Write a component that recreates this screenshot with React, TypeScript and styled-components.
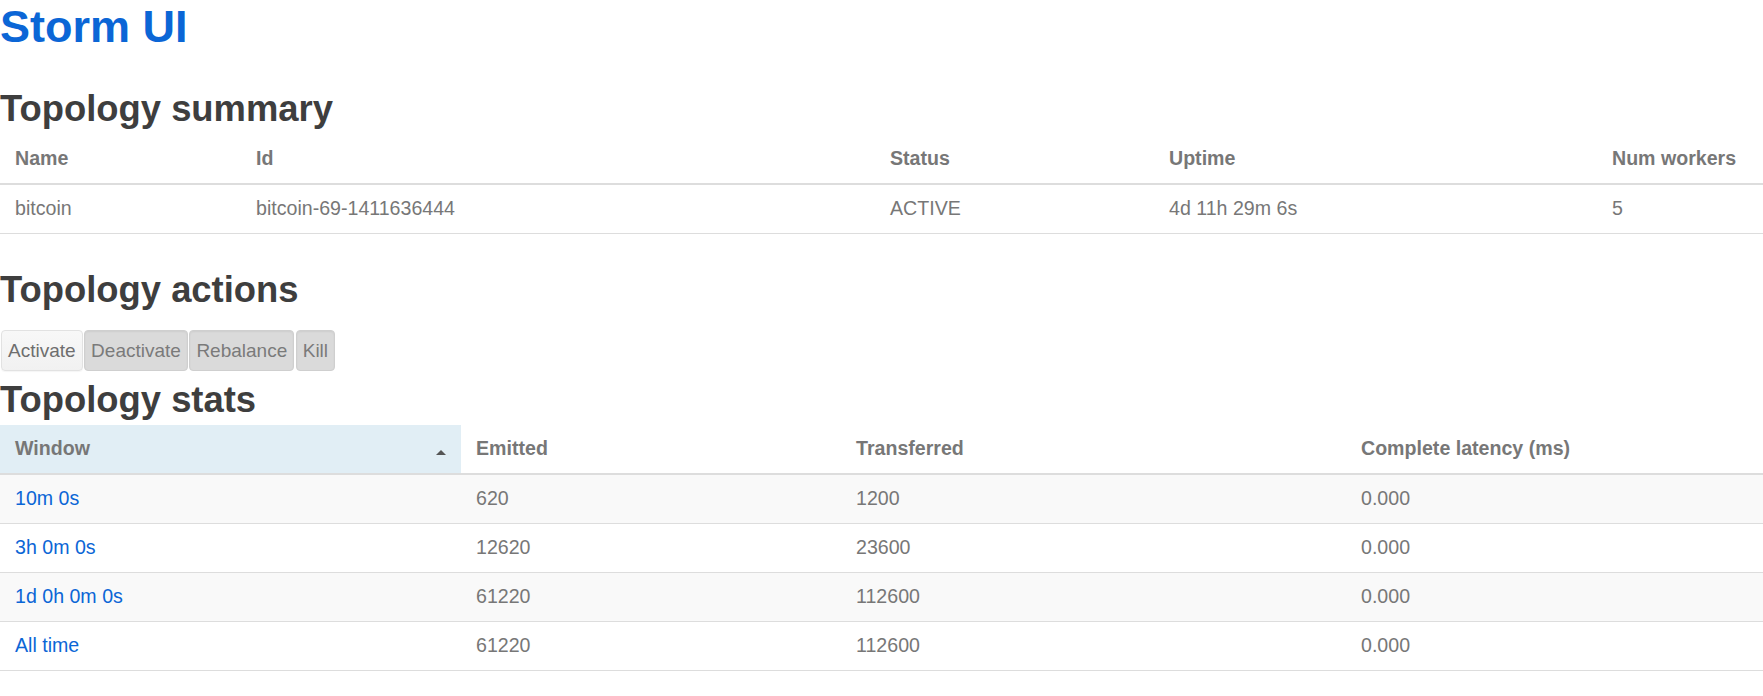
import React from "react";
import styled, { createGlobalStyle } from "styled-components";

const GlobalStyle = createGlobalStyle`
  html, body {
    margin: 0;
    padding: 0;
    background: #ffffff;
  }
  body {
    font-family: "Liberation Sans", Arial, Helvetica, sans-serif;
    font-size: 19.6px;
    line-height: 27px;
    color: #777777;
  }
`;

const Page = styled.div`
  display: flex;
  flex-direction: column;
`;

const Title = styled.h1`
  margin: 3px 0 0;
  font-size: 45px;
  line-height: 48px;
  font-weight: bold;
`;

const TitleLink = styled.a`
  color: #0b66d6;
  text-decoration: none;
`;

const Heading = styled.h2<{ $top: number; $bottom: number }>`
  margin: ${(p) => p.$top}px 0 ${(p) => p.$bottom}px;
  font-size: 36.4px;
  line-height: 40px;
  font-weight: bold;
  color: #3e3e3e;
`;

const Table = styled.table`
  width: 100%;
  table-layout: fixed;
  border-collapse: separate;
  border-spacing: 0;
`;

const Col = styled.col<{ $w: number }>`
  width: ${(p) => p.$w}px;
`;

const HeadCell = styled.th<{ $sorted?: boolean }>`
  padding: 10.5px 14px 10.5px 15px;
  text-align: left;
  font-weight: bold;
  color: #777777;
  white-space: nowrap;
  border-bottom: 2px solid #dddddd;
  background: ${(p) => (p.$sorted ? "#e1eef5" : "transparent")};
`;

const HeadInner = styled.div`
  display: flex;
  justify-content: space-between;
`;

const SortArrow = styled.span`
  width: 0;
  height: 0;
  border-left: 5.5px solid transparent;
  border-right: 5.5px solid transparent;
  border-bottom: 5px solid #555555;
  align-self: flex-end;
  margin: 0 1px 7.5px 0;
`;

const Row = styled.tr<{ $striped?: boolean }>`
  background: ${(p) => (p.$striped ? "#f9f9f9" : "#ffffff")};
`;

const Cell = styled.td`
  padding: 10.5px 14px 10.5px 15px;
  text-align: left;
  color: #777777;
  white-space: nowrap;
  border-bottom: 1px solid #dddddd;
`;

const WindowLink = styled.a`
  color: #0b66d6;
  text-decoration: none;
`;

const Actions = styled.div`
  display: flex;
  gap: 1.5px;
  padding-left: 1px;
`;

const ActionButton = styled.button<{ $enabled?: boolean }>`
  font-family: inherit;
  font-size: 19px;
  line-height: 27px;
  padding: 6px;
  border-radius: 4px;
  cursor: default;
  border: 1px solid ${(p) => (p.$enabled ? "#e2e2e2" : "#cfcfcf")};
  background: ${(p) =>
    p.$enabled ? "linear-gradient(#f8f8f8, #f1f1f1)" : "#dadada"};
  color: ${(p) => (p.$enabled ? "#6e6e6e" : "#7a7a7a")};
  box-shadow: ${(p) =>
    p.$enabled ? "0 1px 1px rgba(0,0,0,0.04)" : "inset 0 1px 2px rgba(0,0,0,0.06)"};
`;

const summaryCols = [241, 634, 279, 443, 166];
const summaryHead = ["Name", "Id", "Status", "Uptime", "Num workers"];
const summaryRow = ["bitcoin", "bitcoin-69-1411636444", "ACTIVE", "4d 11h 29m 6s", "5"];

const statsCols = [461, 380, 505, 417];
const statsRows = [
  ["10m 0s", "620", "1200", "0.000"],
  ["3h 0m 0s", "12620", "23600", "0.000"],
  ["1d 0h 0m 0s", "61220", "112600", "0.000"],
  ["All time", "61220", "112600", "0.000"],
];

export default function App() {
  return (
    <>
      <GlobalStyle />
      <Page>
        <Title>
          <TitleLink href="#">Storm UI</TitleLink>
        </Title>

        <Heading $top={37.5} $bottom={6}>
          Topology summary
        </Heading>
        <Table>
          <colgroup>
            {summaryCols.map((w, i) => (
              <Col key={i} $w={w} />
            ))}
          </colgroup>
          <thead>
            <tr>
              {summaryHead.map((h) => (
                <HeadCell key={h}>{h}</HeadCell>
              ))}
            </tr>
          </thead>
          <tbody>
            <Row>
              {summaryRow.map((v, i) => (
                <Cell key={i}>{v}</Cell>
              ))}
            </Row>
          </tbody>
        </Table>

        <Heading $top={36} $bottom={20}>
          Topology actions
        </Heading>
        <Actions>
          <ActionButton $enabled>Activate</ActionButton>
          <ActionButton>Deactivate</ActionButton>
          <ActionButton>Rebalance</ActionButton>
          <ActionButton>Kill</ActionButton>
        </Actions>

        <Heading $top={9} $bottom={5}>
          Topology stats
        </Heading>
        <Table>
          <colgroup>
            {statsCols.map((w, i) => (
              <Col key={i} $w={w} />
            ))}
          </colgroup>
          <thead>
            <tr>
              <HeadCell $sorted>
                <HeadInner>
                  <span>Window</span>
                  <SortArrow />
                </HeadInner>
              </HeadCell>
              <HeadCell>Emitted</HeadCell>
              <HeadCell>Transferred</HeadCell>
              <HeadCell>Complete latency (ms)</HeadCell>
            </tr>
          </thead>
          <tbody>
            {statsRows.map((r, i) => (
              <Row key={i} $striped={i % 2 === 0}>
                <Cell>
                  <WindowLink href="#">{r[0]}</WindowLink>
                </Cell>
                <Cell>{r[1]}</Cell>
                <Cell>{r[2]}</Cell>
                <Cell>{r[3]}</Cell>
              </Row>
            ))}
          </tbody>
        </Table>
      </Page>
    </>
  );
}
